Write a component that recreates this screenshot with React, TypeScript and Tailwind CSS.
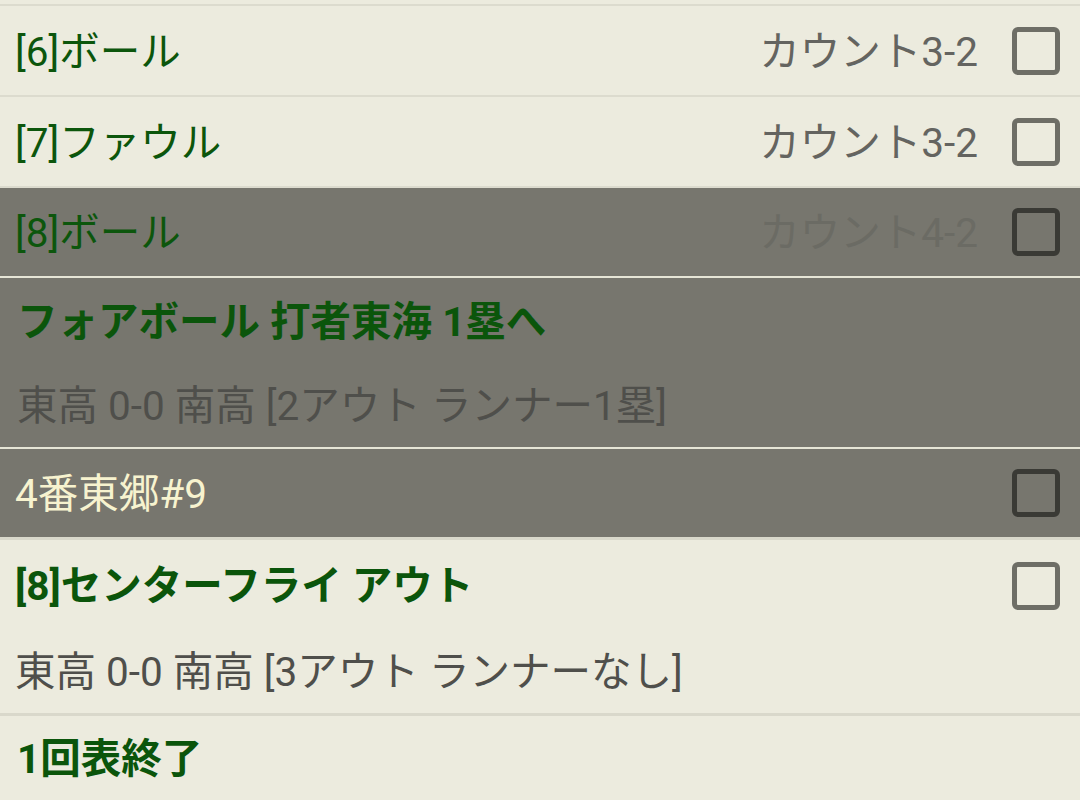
const FONT = { fontFamily: 'Roboto, "Noto Sans CJK JP", sans-serif' };

function Check({ dark }: { dark?: boolean }) {
  return (
    <div
      className={`w-[48px] h-[48px] rounded-[6px] border-[5px] shrink-0 ${dark ? 'border-[#3a3a35]' : 'border-[#6e6e66]'}`}
    />
  );
}

function Sep({ className }: { className: string }) {
  return <div className={className} />;
}

function PitchRow({ label, count, dark, h }: { label: string; count: string; dark?: boolean; h: string }) {
  return (
    <div className={`flex items-center pl-[15px] pr-[20px] ${h} ${dark ? 'bg-[#77766e]' : 'bg-[#ecebde]'}`}>
      <span className="flex-1 text-[#0c560c] pt-[3px]">{label}</span>
      <span className={`mr-[34px] pt-[3px] ${dark ? 'text-[#6b6b64]' : 'text-[#646460]'}`}>{count}</span>
      <Check dark={dark} />
    </div>
  );
}

export default function App() {
  return (
    <div className="w-[1080px] h-[800px] overflow-hidden bg-[#ecebde] text-[40.5px] leading-none" style={FONT}>
      <div className="h-[4px] bg-[#ecebde]" />
      <Sep className="h-[2px] bg-[#dcdbce]" />
      <PitchRow label="[6]ボール" count="カウント3-2" h="h-[89px]" />
      <Sep className="h-[2px] bg-[#dcdbce]" />
      <PitchRow label="[7]ファウル" count="カウント3-2" h="h-[89px]" />
      <Sep className="h-[2px] bg-[#dcdbce]" />
      <PitchRow label="[8]ボール" count="カウント4-2" dark h="h-[88px]" />
      <Sep className="h-[2px] bg-[#e6e5d6]" />

      <div className="bg-[#77766e] h-[169px] pl-[17px] flex flex-col">
        <div className="h-[88px] flex items-center font-bold text-[#0b550b]">フォアボール 打者東海 1塁へ</div>
        <div className="h-[81px] flex items-center text-[#4f4f4b]">東高 0-0 南高 [2アウト ランナー1塁]</div>
      </div>
      <Sep className="h-[2px] bg-[#e6e5d6]" />

      <div className="flex items-center pl-[15px] pr-[20px] h-[88px] bg-[#77766e]">
        <span className="flex-1 text-[#f7f3cf] pt-[3px]">4番東郷#9</span>
        <Check dark />
      </div>
      <Sep className="h-[3px] bg-[#d9d8cb]" />

      <div className="bg-[#ecebde] h-[173px] pl-[15px] pr-[20px] flex flex-col">
        <div className="h-[92px] flex items-center">
          <span className="flex-1 font-bold text-[#0b550b]">[8]センターフライ アウト</span>
          <Check />
        </div>
        <div className="h-[81px] flex items-center text-[#4f4f4b]">東高 0-0 南高 [3アウト ランナーなし]</div>
      </div>
      <Sep className="h-[3px] bg-[#d9d8cb]" />

      <div className="h-[86px] flex items-center pl-[17px] font-bold text-[#0b550b]">1回表終了</div>
    </div>
  );
}
